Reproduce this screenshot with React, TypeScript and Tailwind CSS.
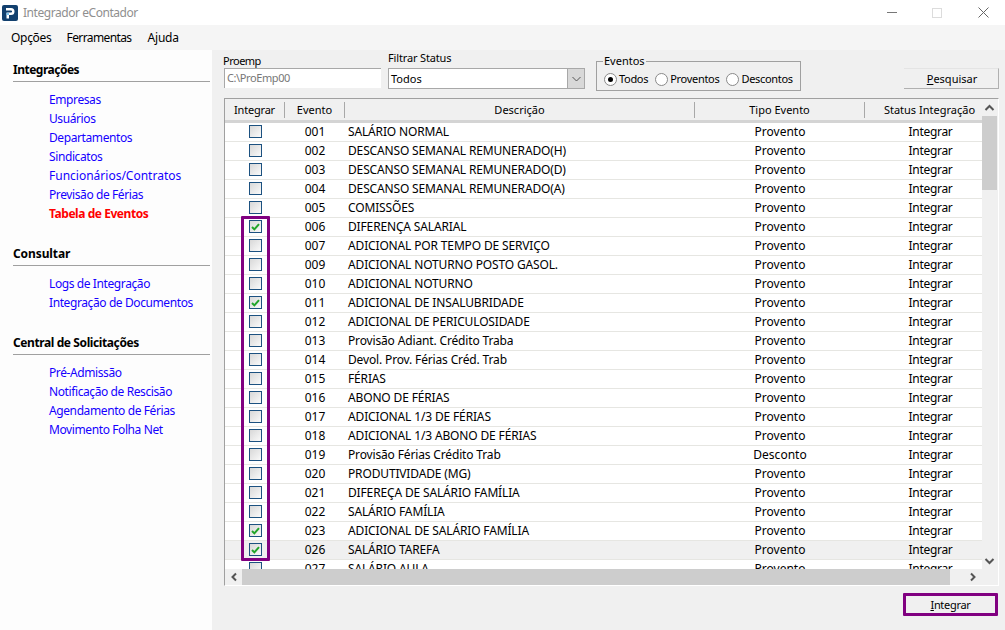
const rows: [string, string, string, boolean?][] = [
  ["001", "SALÁRIO NORMAL", "Provento"],
  ["002", "DESCANSO SEMANAL REMUNERADO(H)", "Provento"],
  ["003", "DESCANSO SEMANAL REMUNERADO(D)", "Provento"],
  ["004", "DESCANSO SEMANAL REMUNERADO(A)", "Provento"],
  ["005", "COMISSÕES", "Provento"],
  ["006", "DIFERENÇA SALARIAL", "Provento", true],
  ["007", "ADICIONAL POR TEMPO DE SERVIÇO", "Provento"],
  ["009", "ADICIONAL NOTURNO POSTO GASOL.", "Provento"],
  ["010", "ADICIONAL NOTURNO", "Provento"],
  ["011", "ADICIONAL DE INSALUBRIDADE", "Provento", true],
  ["012", "ADICIONAL DE PERICULOSIDADE", "Provento"],
  ["013", "Provisão Adiant. Crédito Traba", "Provento"],
  ["014", "Devol. Prov. Férias Créd. Trab", "Provento"],
  ["015", "FÉRIAS", "Provento"],
  ["016", "ABONO DE FÉRIAS", "Provento"],
  ["017", "ADICIONAL 1/3 DE FÉRIAS", "Provento"],
  ["018", "ADICIONAL 1/3 ABONO DE FÉRIAS", "Provento"],
  ["019", "Provisão Férias Crédito Trab", "Desconto"],
  ["020", "PRODUTIVIDADE (MG)", "Provento"],
  ["021", "DIFEREÇA DE SALÁRIO FAMÍLIA", "Provento"],
  ["022", "SALÁRIO FAMÍLIA", "Provento"],
  ["023", "ADICIONAL DE SALÁRIO FAMÍLIA", "Provento", true],
  ["026", "SALÁRIO TAREFA", "Provento", true],
  ["027", "SALÁRIO AULA", "Provento"],
];

const nav = [
  { title: "Integrações", cls: "tracking-[-0.5px]", links: ["Empresas", "Usuários", "Departamentos", "Sindicatos", "Funcionários/Contratos", "Previsão de Férias", "Tabela de Eventos"] },
  { title: "Consultar", cls: "tracking-[-0.1px]", links: ["Logs de Integração", "Integração de Documentos"] },
  { title: "Central de Solicitações", cls: "tracking-[-0.4px]", links: ["Pré-Admissão", "Notificação de Rescisão", "Agendamento de Férias", "Movimento Folha Net"] },
];

function Check({ on }: { on?: boolean }) {
  return (
    <span className="mb-px flex h-[13px] w-[13px] items-center justify-center border border-[#1c5180] bg-gradient-to-br from-[#d8d8d8] to-[#fafafa]">
      {on ? (
        <svg width="9" height="8" viewBox="0 0 9 8" fill="none">
          <path d="M1 4l2.4 2.4L8 1.2" stroke="#22a52a" strokeWidth="2" />
        </svg>
      ) : null}
    </span>
  );
}

function Radio({ on, label }: { on?: boolean; label: string }) {
  return (
    <span className="flex items-center gap-[2px]">
      <span className="flex h-[13px] w-[13px] items-center justify-center rounded-full border border-[#8a8a8a] bg-white">
        {on ? <span className="h-[5px] w-[5px] rounded-full bg-black" /> : null}
      </span>
      <span className="tracking-[-0.3px]">{label}</span>
    </span>
  );
}

export default function App() {
  return (
    <div className="relative flex h-[630px] w-[1005px] flex-col overflow-hidden bg-[#f0f0f0] font-['Noto_Sans',sans-serif] text-[12px] leading-[16px] text-black">
      <div className="flex h-[25px] items-center bg-white pl-[2px]">
        <svg width="16" height="16" viewBox="0 0 16 16" className="mr-[5px]">
          <rect width="16" height="16" rx="2" fill="#12406e" />
          <path d="M4 3h5a3.5 3.5 0 0 1 0 7H7v3.5H4.5V7.6H9a1.1 1.1 0 0 0 0-2.2H4z" fill="#fff" />
          <rect x="4.5" y="8" width="2.5" height="2" fill="#7cc4ee" />
        </svg>
        <span className="tracking-[-0.45px] text-[#8f8f8f]">Integrador eContador</span>
        <div className="ml-auto flex items-center pr-[16px]">
          <span className="h-px w-[10px] bg-[#777]" />
          <span className="ml-[35px] h-[10px] w-[10px] border border-[#dcdcdc]" />
          <svg width="11" height="11" viewBox="0 0 11 11" stroke="#666" className="ml-[36px]">
            <path d="M.5.5l10 10M10.5.5l-10 10" />
          </svg>
        </div>
      </div>
      <div className="flex h-[25px] items-center bg-[#f5f5f5] pl-[11px]">
        <span className="tracking-[-0.3px]">Opções</span>
        <span className="ml-[15px] tracking-[-0.6px]">Ferramentas</span>
        <span className="ml-[16px] tracking-[-0.2px]">Ajuda</span>
      </div>
      <div className="flex min-h-0 flex-1">
        <aside className="w-[212px] shrink-0 bg-[#fdfdfd] pl-[13px] pr-[2px] pt-[12px]">
          {nav.map((g) => (
            <div key={g.title} className="mb-[21px]">
              <div className="border-b border-[#a0a0a0] pb-[3px] font-bold">
                <span className={g.cls}>{g.title}</span>
              </div>
              <ul className="pl-[36px] pt-[10px]">
                {g.links.map((l) => (
                  <li
                    key={l}
                    className={
                      l === "Tabela de Eventos"
                        ? "h-[19px] font-bold tracking-[-0.45px] text-[#ff0000]"
                        : l === "Funcionários/Contratos"
                          ? "h-[19px] text-[#1500ff]"
                          : "h-[19px] tracking-[-0.4px] text-[#1500ff]"
                    }
                  >
                    {l}
                  </li>
                ))}
              </ul>
            </div>
          ))}
        </aside>
        <main className="flex min-w-0 flex-1 flex-col pl-[12px] pr-[6px]">
          <div className="flex h-[48px] items-start text-[11px]">
            <div className="mt-[3px] w-[157px] shrink-0">
              <div className="-ml-px h-[15px] tracking-[-0.5px]">Proemp</div>
              <div className="h-[20px] border-l border-t border-[#a8a8a8] bg-white pl-[2px] leading-[17px] tracking-[-0.4px] text-[#777]">C:\ProEmp00</div>
            </div>
            <div className="ml-[7px] mt-[1px] w-[197px] shrink-0">
              <div className="h-[17px] -translate-y-px tracking-[-0.15px]">Filtrar Status</div>
              <div className="flex h-[21px] items-center justify-between border border-[#a8a8a8] bg-white pl-[2px]">
                Todos
                <span className="flex h-[19px] w-[17px] items-center justify-center border-l border-[#a8a8a8] bg-[#d8d8d8]">
                  <svg width="9" height="6" viewBox="0 0 9 6" fill="none" stroke="#555">
                    <path d="M.5 1L4.5 5l4-4" />
                  </svg>
                </span>
              </div>
            </div>
            <fieldset className="ml-[11px] mt-[5px] flex h-[36px] w-[205px] shrink-0 items-start gap-[7px] border border-[#a0a0a0] pl-[7px] pt-[4px]">
              <legend className="-ml-px px-[1px] leading-[12px]">Eventos</legend>
              <Radio on label="Todos" />
              <Radio label="Proventos" />
              <Radio label="Descontos" />
            </fieldset>
            <button className="ml-[103px] mt-[18px] h-[21px] w-[95px] shrink-0 border-b border-r border-t border-[#b0b0b0] border-l-white border-t-[#e4e4e4] bg-[#f0f0f0] pl-[2px]">
              <u>P</u>esquisar
            </button>
          </div>
          <div className="flex h-[488px] flex-col border-b border-l border-r border-t border-[#a0a0a0] border-b-white border-r-white">
            <div className="flex min-h-0 flex-1">
              <div className="w-[757px] overflow-hidden bg-white">
                <div className="flex h-[24px] w-[771px] items-center border-b-[3px] border-[#d4d4d4] bg-[#f0f0f0] text-[11px]">
                  <div className="w-[60px] border-r border-[#a8a8a8] text-center tracking-[-0.2px]">Integrar</div>
                  <div className="w-[60px] border-r border-[#a8a8a8] text-center">Evento</div>
                  <div className="w-[350px] border-r border-[#a8a8a8] text-center">Descrição</div>
                  <div className="w-[170px] border-r border-[#a8a8a8] text-center">Tipo Evento</div>
                  <div className="w-[129px] text-center">Status Integração</div>
                </div>
                {rows.map(([code, desc, tipo, on]) => (
                  <div key={code} className={code === "026" ? "flex h-[19px] w-[771px] items-center border-b border-[#e6e6e2] bg-[#f0f0f0]" : "flex h-[19px] w-[771px] items-center border-b border-[#e6e6e2]"}>
                    <div className="flex w-[60px] justify-center"><Check on={on} /></div>
                    <div className="w-[60px] text-center">{code}</div>
                    <div className="w-[350px] pl-[3px] tracking-[-0.15px]">{desc}</div>
                    <div className="w-[170px] text-center">{tipo}</div>
                    <div className="w-[131px] text-center tracking-[-0.3px]">Integrar</div>
                  </div>
                ))}
              </div>
              <div className="flex w-[16px] flex-col items-start bg-[#f0f0f0]">
                <svg width="15" height="17" viewBox="0 0 15 17" fill="none" stroke="#555" strokeWidth="2" className="shrink-0">
                  <path d="M3.5 11l4-4 4 4" />
                </svg>
                <div className="h-[74px] w-[15px] bg-[#cdcdcd]" />
                <svg width="15" height="16" viewBox="0 0 15 16" fill="none" stroke="#555" strokeWidth="2" className="mt-auto shrink-0">
                  <path d="M3.5 6l4 4 4-4" />
                </svg>
              </div>
            </div>
            <div className="flex h-[16px] shrink-0 bg-[#f0f0f0]">
              <div className="flex w-[757px] items-center">
                <svg width="17" height="16" viewBox="0 0 17 16" fill="none" stroke="#555" strokeWidth="2" className="shrink-0">
                  <path d="M11 4.5L7.5 8l3.5 3.5" />
                </svg>
                <div className="h-full w-[708px] bg-[#cdcdcd]" />
                <svg width="17" height="16" viewBox="0 0 17 16" fill="none" stroke="#555" strokeWidth="2" className="ml-auto shrink-0">
                  <path d="M6 4.5L9.5 8 6 11.5" />
                </svg>
              </div>
            </div>
          </div>
          <div className="flex justify-end pr-px pt-[7px]">
            <button className="h-[23px] w-[95px] rounded-[1px] border-[3px] border-[#800080] bg-[#f0f0f0] text-[11px] tracking-[-0.3px]">
              <u>I</u>ntegrar
            </button>
          </div>
        </main>
      </div>
      <div className="pointer-events-none absolute left-[241px] top-[216px] h-[345px] w-[29px] rounded-[1px] border-[3px] border-[#800080]" />
    </div>
  );
}
